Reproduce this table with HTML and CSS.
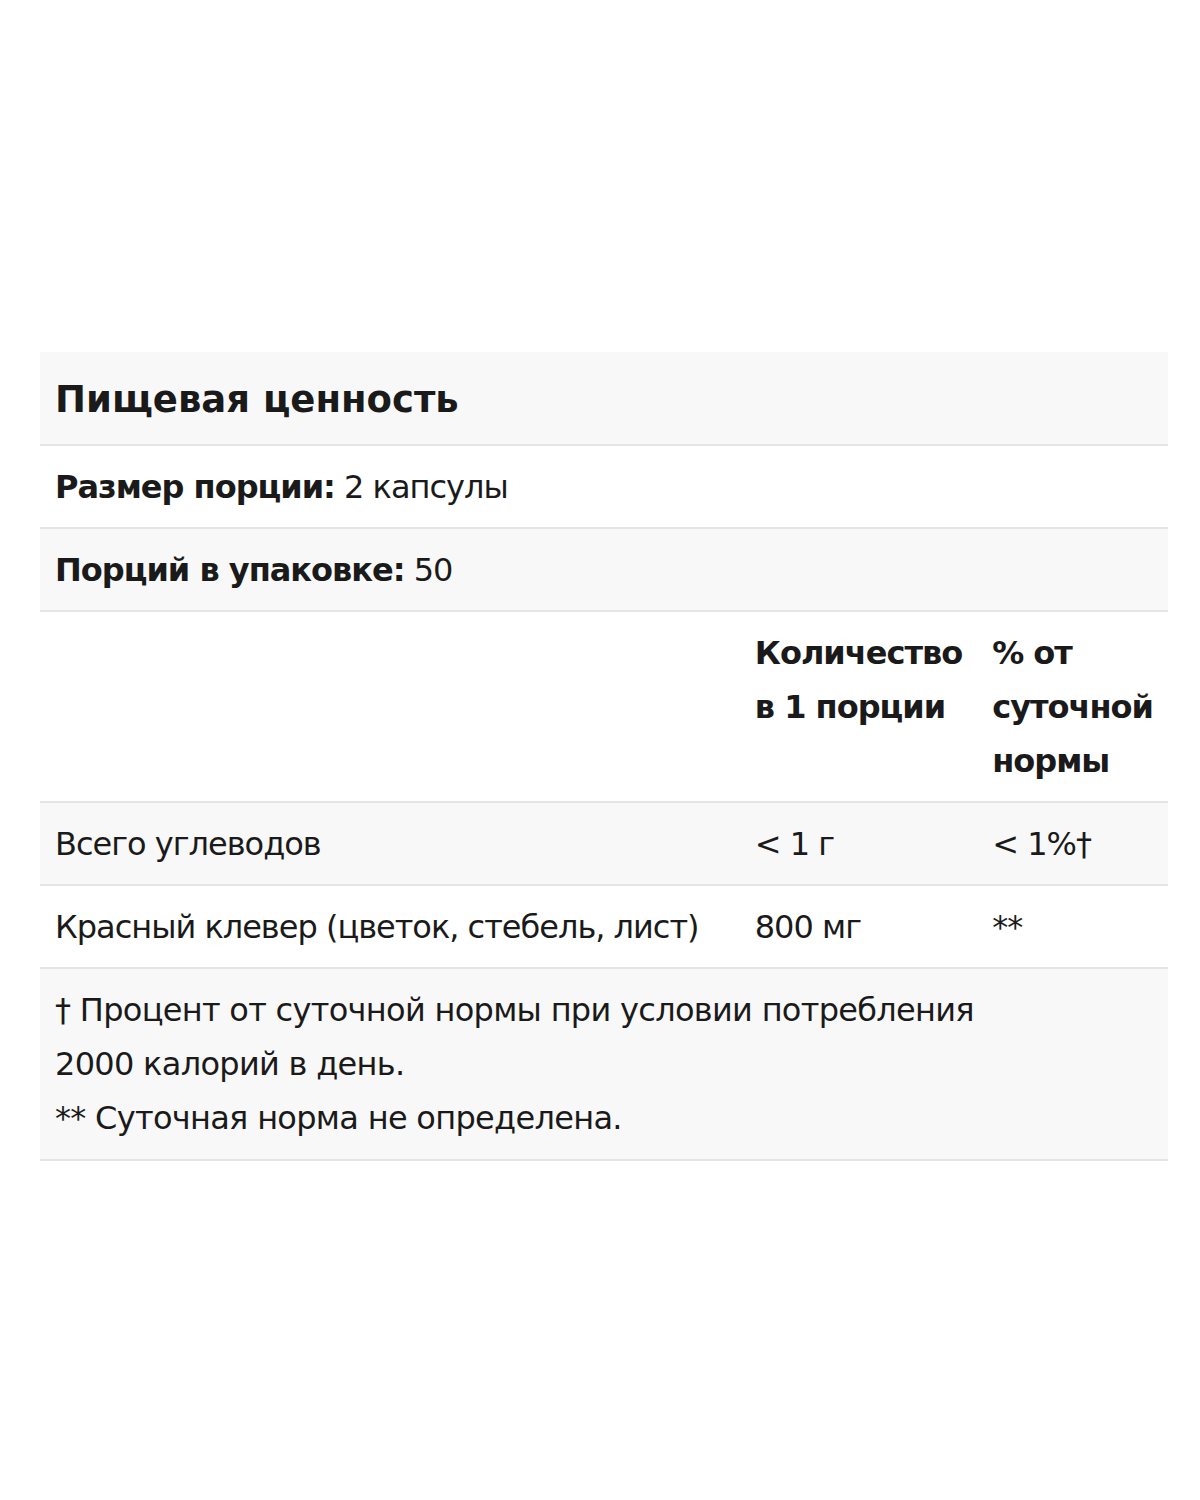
FILE: index.html
```html
<!DOCTYPE html>
<html lang="ru">
<head>
  <meta charset="UTF-8" />
  <meta name="viewport" content="width=device-width, initial-scale=1.0"/>
  <title>Пищевая ценность</title>
  <link rel="stylesheet" href="styles.css">
</head>
<body>
  <div class="page">
    <table class="facts">
      <tr class="shade">
        <td colspan="3" class="title">Пищевая ценность</td>
      </tr>
      <tr>
        <td colspan="3"><b>Размер порции:</b> 2 капсулы</td>
      </tr>
      <tr class="shade">
        <td colspan="3"><b>Порций в упаковке:</b> 50</td>
      </tr>
      <tr>
        <th class="col-name"></th>
        <th class="col-amount">Количество в&nbsp;1&nbsp;порции</th>
        <th class="col-dv">% от суточной нормы</th>
      </tr>
      <tr class="shade">
        <td>Всего углеводов</td>
        <td>&lt; 1 г</td>
        <td>&lt; 1%†</td>
      </tr>
      <tr>
        <td>Красный клевер (цветок, стебель, лист)</td>
        <td>800 мг</td>
        <td>**</td>
      </tr>
      <tr class="shade">
        <td colspan="3" class="notes">
          † Процент от суточной нормы при условии потребления<br>
          2000 калорий в день.<br>
          ** Суточная норма не определена.
        </td>
      </tr>
    </table>
  </div>
</body>
</html>
```

FILE: styles.css
```css
body {
  margin: 0;
  background: #fff;
  font-family: "DejaVu Sans", "Liberation Sans", Arial, sans-serif;
  color: #1a1a1a;
}

.page {
  padding: 352px 32px 0 40px;
}

.facts {
  width: 1128px;
  border-collapse: collapse;
  font-size: 32px;
  line-height: 54px;
  letter-spacing: -1px;
}

.facts tr {
  border-bottom: 2px solid #e4e4e4;
}

.facts tr.shade {
  background: #f8f8f8;
}

.facts td,
.facts th {
  padding: 13.5px 15px;
  text-align: left;
  vertical-align: top;
}

.facts th {
  font-weight: bold;
}

.facts .title {
  font-size: 37px;
  font-weight: bold;
  letter-spacing: 0;
  padding: 21px 15px 17px;
}

.col-name {
  width: 670px;
}

.col-amount {
  width: 207px;
}

.facts .notes {
  letter-spacing: -0.7px;
  padding-bottom: 14px;
}
```
